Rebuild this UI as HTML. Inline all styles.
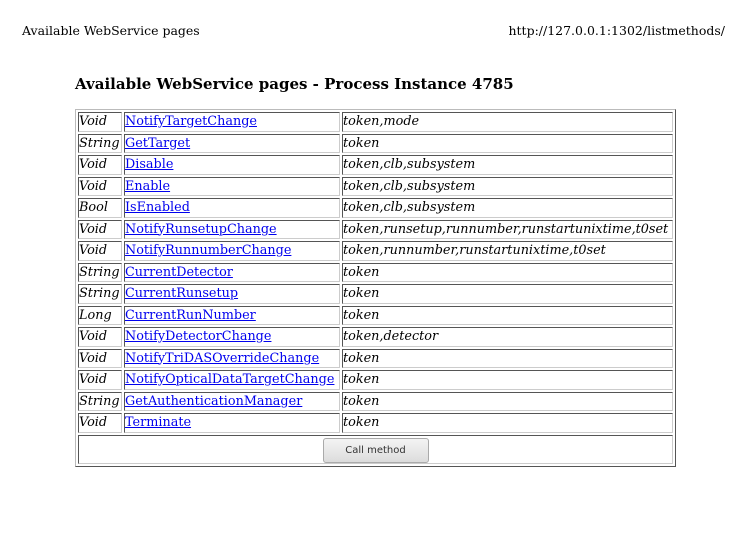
<!DOCTYPE html>
<html><head><meta charset="utf-8"><style>
body{margin:0;width:747px;height:534px;background:#fff;font-family:"DejaVu Serif",serif;color:#000;position:relative}
.hl{position:absolute;top:23px;left:22px;font-size:12.5px}
.hr{position:absolute;top:23px;right:22px;font-size:12.5px}
h1{position:absolute;top:75px;left:75px;margin:0;font-size:15px;font-weight:bold}
table{position:absolute;top:109px;left:75px;width:601px;border:1px solid;border-color:#bbb #555 #555 #bbb;border-spacing:2px;font-size:12.8px;table-layout:fixed;box-sizing:border-box}
td{border:1px solid;border-color:#555 #ccc #ccc #555;padding:0;height:17.5px;line-height:17.5px;white-space:nowrap;overflow:visible}
td.i{font-style:italic}
a{color:#00e}
button{font-family:"DejaVu Sans",sans-serif;font-size:10px;width:106px;height:25px;border:1px solid #aaa;border-radius:3px;background:linear-gradient(#f4f4f4,#dcdcdc);color:#333}
</style></head><body>
<div class="hl">Available WebService pages</div>
<div class="hr">http://127.0.0.1:1302/listmethods/</div>
<h1>Available WebService pages - Process Instance 4785</h1>
<table>
<col style="width:44px"><col style="width:216px"><col>
<tr><td class="i">Void</td><td><a href="#">NotifyTargetChange</a></td><td class="i">token,mode</td></tr>
<tr><td class="i">String</td><td><a href="#">GetTarget</a></td><td class="i">token</td></tr>
<tr><td class="i">Void</td><td><a href="#">Disable</a></td><td class="i">token,clb,subsystem</td></tr>
<tr><td class="i">Void</td><td><a href="#">Enable</a></td><td class="i">token,clb,subsystem</td></tr>
<tr><td class="i">Bool</td><td><a href="#">IsEnabled</a></td><td class="i">token,clb,subsystem</td></tr>
<tr><td class="i">Void</td><td><a href="#">NotifyRunsetupChange</a></td><td class="i">token,runsetup,runnumber,runstartunixtime,t0set</td></tr>
<tr><td class="i">Void</td><td><a href="#">NotifyRunnumberChange</a></td><td class="i">token,runnumber,runstartunixtime,t0set</td></tr>
<tr><td class="i">String</td><td><a href="#">CurrentDetector</a></td><td class="i">token</td></tr>
<tr><td class="i">String</td><td><a href="#">CurrentRunsetup</a></td><td class="i">token</td></tr>
<tr><td class="i">Long</td><td><a href="#">CurrentRunNumber</a></td><td class="i">token</td></tr>
<tr><td class="i">Void</td><td><a href="#">NotifyDetectorChange</a></td><td class="i">token,detector</td></tr>
<tr><td class="i">Void</td><td><a href="#">NotifyTriDASOverrideChange</a></td><td class="i">token</td></tr>
<tr><td class="i">Void</td><td><a href="#">NotifyOpticalDataTargetChange</a></td><td class="i">token</td></tr>
<tr><td class="i">String</td><td><a href="#">GetAuthenticationManager</a></td><td class="i">token</td></tr>
<tr><td class="i">Void</td><td><a href="#">Terminate</a></td><td class="i">token</td></tr>
<tr><td colspan="3" style="text-align:center;height:27px;line-height:27px"><button>Call method</button></td></tr>
</table>
</body></html>
